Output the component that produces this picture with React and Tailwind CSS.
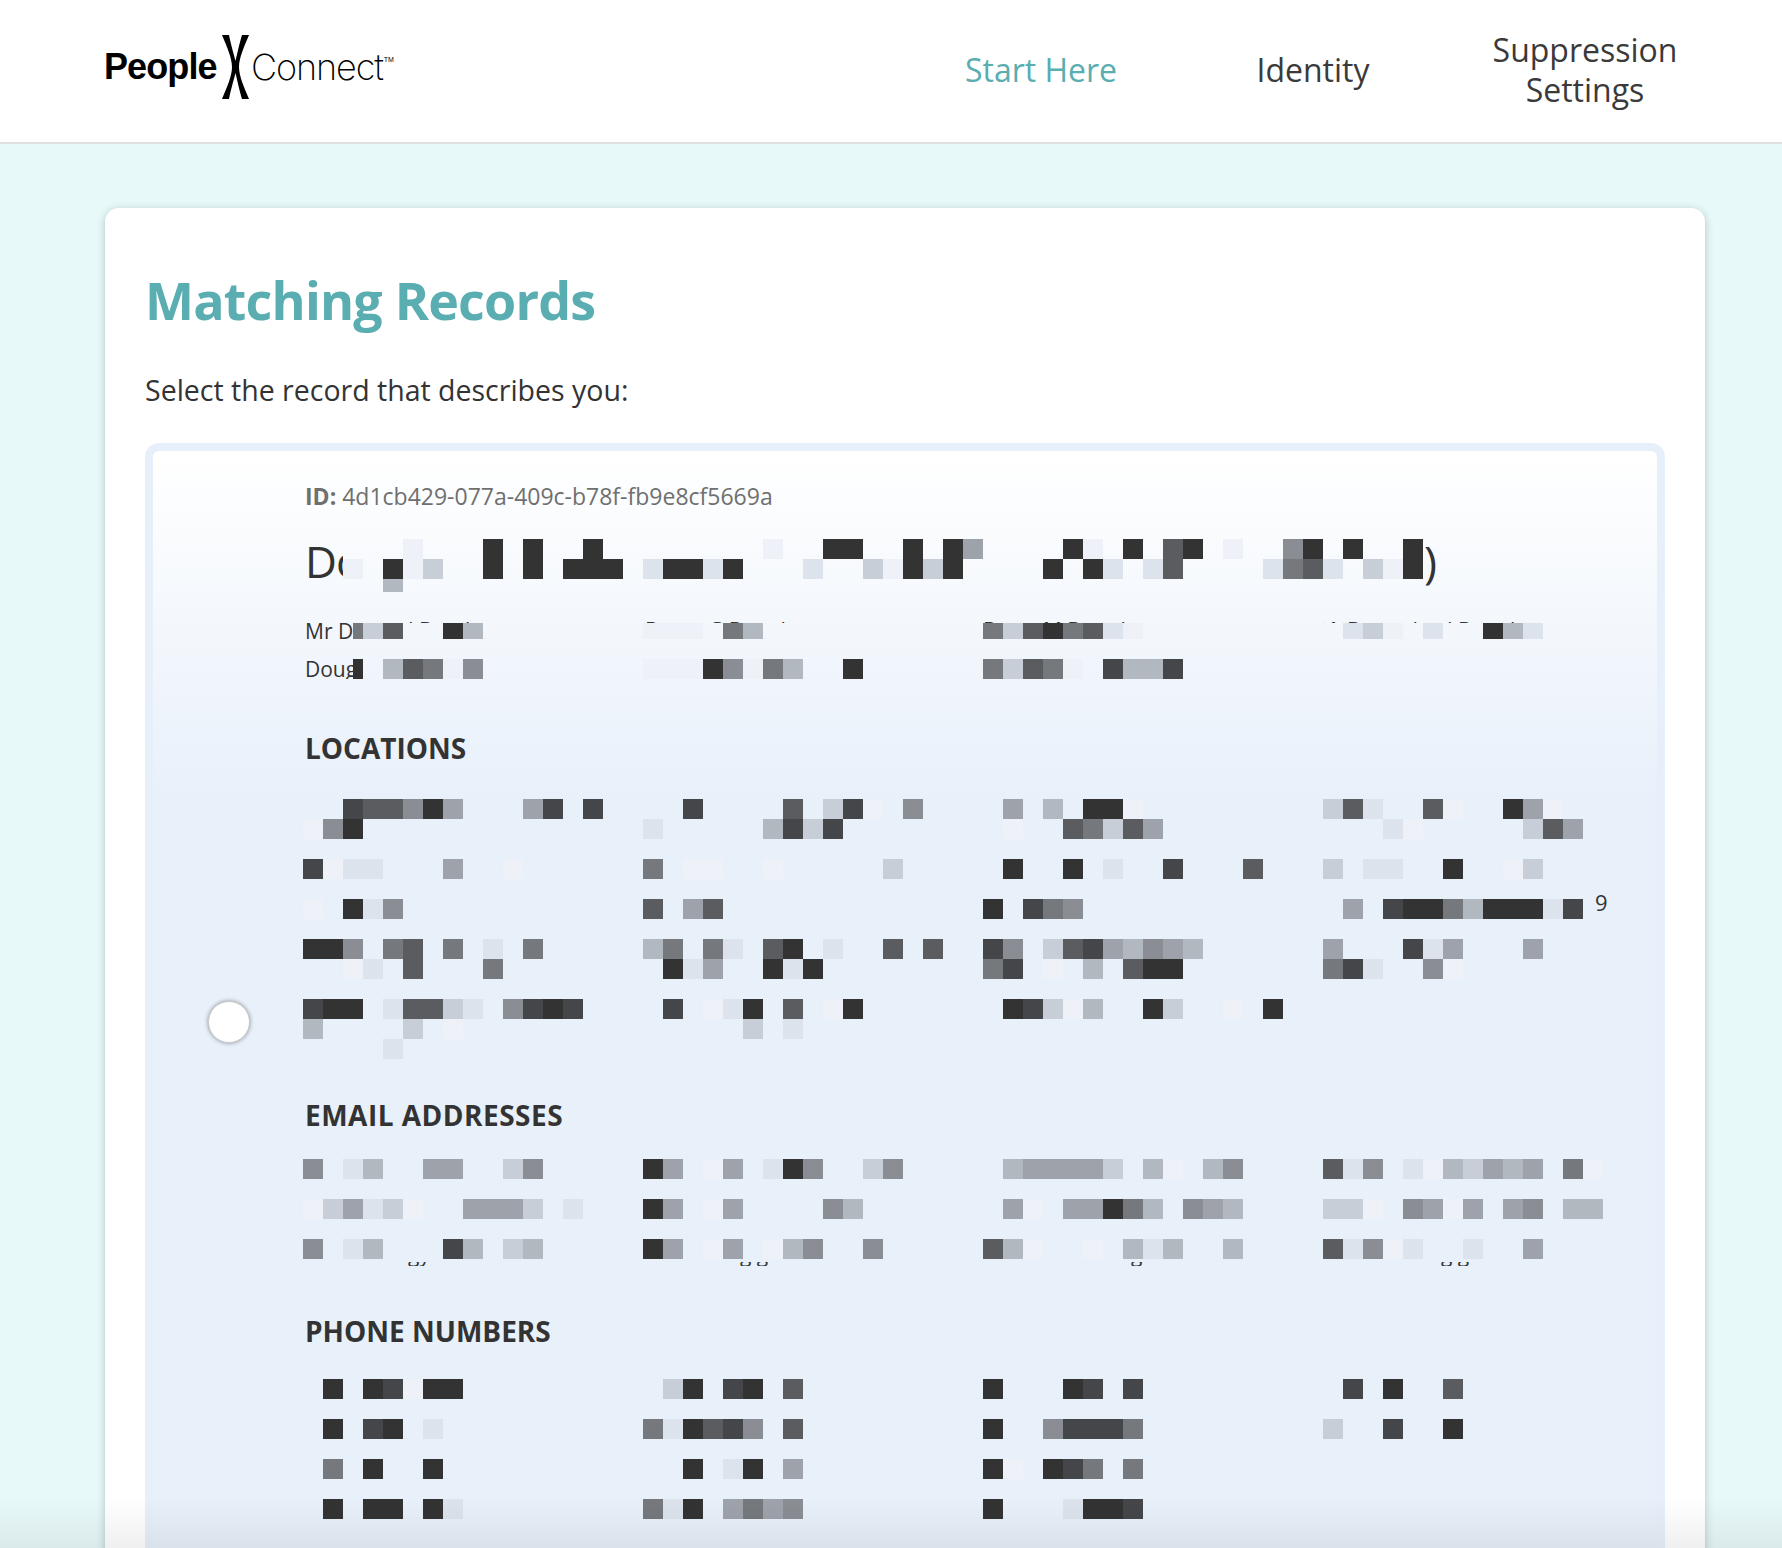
const SHADES = {
  "1": "bg-[#eef2f8]",
  "2": "bg-[#dde3ec]",
  "3": "bg-[#c8ced7]",
  "4": "bg-[#b2b8c0]",
  "5": "bg-[#9ea3ab]",
  "6": "bg-[#8a8e94]",
  "7": "bg-[#75787d]",
  "8": "bg-[#5a5c60]",
  "9": "bg-[#444649]",
  "0": "bg-[#333333]",
};

function Row({ cells = "", tall = "h-5" }) {
  return (
    <div className={`flex ${tall}`}>
      {cells.split("").map((c, i) => (
        <span key={i} className={`w-5 shrink-0 ${SHADES[c] || ""}`} />
      ))}
    </div>
  );
}

function Sparse({ map, from, tall }) {
  const keys = Object.keys(map).map(Number);
  const end = Math.max(...keys);
  let cells = "";
  for (let i = from; i <= end; i++) cells += map[i] || " ";
  return <Row cells={cells} tall={tall} />;
}

function Cols({ columns, extra }) {
  return (
    <div className="grid grid-cols-[340px_340px_340px_340px]">
      {columns.map((rows, i) => (
        <div key={i} className="relative">
          {rows.map((r, j) => (
            <Row key={j} cells={r} />
          ))}
          {extra && extra[i]}
        </div>
      ))}
    </div>
  );
}

function Heading({ children, className }) {
  return (
    <h3 className={`ml-[2px] h-[30px] text-[28px] leading-[30px] font-bold text-[#333333] ${className}`}>
      {children}
    </h3>
  );
}

function Tips({ items }) {
  return (
    <div className="relative h-[3px] overflow-hidden text-[21px] leading-[24px]">
      {items.map(([left, text]) => (
        <span key={left} className="absolute top-[-2px] whitespace-nowrap" style={{ left }}>
          {text}
        </span>
      ))}
    </div>
  );
}

function Tails({ items }) {
  return (
    <div className="relative mt-[3px] h-1 overflow-hidden text-[21px] leading-[24px]">
      {items.map(([left, text]) => (
        <span key={left} className="absolute top-[-20px] whitespace-nowrap" style={{ left }}>
          {text}
        </span>
      ))}
    </div>
  );
}

const LOCATIONS = [
  ["  988605   59 9", "160", "", "9122   5  1", "", "1 026", "", "006 78 7 2 7", "  12 8   7", "", "900 28832 6909", "4    3 1", "    2"],
  ["  9    8 391 6", "2     4939", "", "7 11  1     3", "", "8 58", "", "47 72 80 2  8 8", " 025  020", "", " 9 120 8 10", "     3 2", ""],
  [" 5 4 001", " 1  87385", "", " 0  0 2  9   8", "", "0 976", "", "96 38954654", "79 1 4 800", "", " 09314  03  1 0", "", ""],
  ["382  81  051", "   21     385", "", "3 22  0  13", "", " 5 9007400029", "", "5   925   5", "792  61", "", "", "", ""],
];

const EMAILS = [
  ["6 24  55  36", "", "135231  5553 2", "", "6 24   94 34"],
  ["05 15 206  36", "", "05 15    64", "", "05 15 146  6"],
  [" 455553 41 46", "", " 51 55074 654", "", "841  1 424  4"],
  ["826 2143545 71", "", "331 6515 56 44", "", "82612  2  5"],
];

const PHONES = [
  [" 0 09100", "", " 0 90 2", "", " 7 0  0", "", " 0 00 02"],
  [" 30 90 8", "", "720896 8", "", "  0 20 5", "", "720 5756"],
  ["0   09 9", "", "0  69997", "", "01 097 7", "", "0   2009"],
  [" 9 0  8", "", "3  9  0", "", "", "", ""],
];

const NAME_TOP = { 5: "1", 9: "0", 11: "0", 14: "0", 23: "1", 26: "0", 27: "0", 30: "0", 32: "0", 33: "5", 38: "0", 39: "1", 41: "0", 43: "8", 44: "0", 46: "1", 49: "6", 50: "0", 52: "0", 55: "0" };
const NAME_MID = { 2: "1", 4: "0", 5: "1", 6: "3", 9: "0", 11: "0", 13: "0", 14: "0", 15: "0", 17: "2", 18: "0", 19: "0", 20: "2", 21: "0", 25: "2", 28: "3", 29: "1", 30: "0", 31: "3", 32: "0", 37: "0", 39: "0", 40: "2", 42: "2", 43: "8", 48: "2", 49: "7", 50: "8", 51: "2", 53: "3", 54: "1", 55: "0" };

function Logo() {
  return (
    <div className="mb-[9px] flex h-[64px] items-center text-black">
      <span className="w-[118px] font-['Liberation_Sans',sans-serif] text-[36px] leading-none font-bold tracking-[-0.9px]">People</span>
      <svg viewBox="0 0 27 64" className="h-16 w-[27px] shrink-0" fill="currentColor">
        <path d="M0 0H7C9 10 12 20 13.5 26C15 20 17 10 20 0H27C22 12 17 23 17 32C17 41 22 52 27 64H20C17 54 15 44 13.5 38C12 44 9 54 7 64H0C5 52 10 41 10 32C10 23 5 12 0 0Z" />
      </svg>
      <span className="ml-[2px] font-['Inter',sans-serif] text-[36px] leading-none font-extralight tracking-[-1.1px]">Connect</span>
      <span className="mb-[14px] ml-[1px] font-['Liberation_Sans',sans-serif] text-[7px] leading-none">TM</span>
    </div>
  );
}

export default function App() {
  return (
    <div className="relative h-[1548px] overflow-hidden bg-[#e8f9f9] font-['Open_Sans',sans-serif] text-[#333333]">
      <header className="flex h-[144px] items-center justify-between border-b-2 border-[#e0e0e0] bg-white pr-[61px] pl-[104px]">
        <Logo />
        <nav className="mb-[3px] flex text-center text-[32px] leading-[40px]">
          <a className="flex w-[272px] items-center justify-center text-[#5aadb0]">Start Here</a>
          <a className="flex w-[272px] items-center justify-center text-[#3a3a3a]">Identity</a>
          <a className="flex w-[272px] items-center justify-center text-[#3a3a3a]">
            Suppression
            <br />
            Settings
          </a>
        </nav>
      </header>

      <main className="mt-16 ml-[105px] w-[1600px] rounded-[14px] bg-white px-10 pt-[62px] shadow-[0_2px_8px_rgba(0,40,40,0.25)]">
        <h1 className="h-[60px] text-[52px] leading-[60px] font-bold tracking-[-0.8px] text-[#5aadb0]">Matching Records</h1>
        <p className="mt-[42px] h-9 text-[28.5px] leading-9 text-[#333333]">Select the record that describes you:</p>

        <section className="mt-[35px] flex h-[1158px] w-[1520px] rounded-[14px] border-8 border-[#e7f0fa] bg-[linear-gradient(#ffffff,#e8f0fa_350px)]">
          <div className="flex w-[150px] shrink-0 items-center justify-center pl-[2px]">
            <span className="size-[42px] rounded-full border border-[#cbcbcb] bg-white shadow-[0_0_4px_rgba(0,0,0,0.4)]" />
          </div>

          <div className="flex-1 pt-[30px]">
            <p className="ml-[2px] h-[30px] text-[23px] leading-[30px] text-[#6f6f6f]">
              <b className="font-bold">ID:</b> 4d1cb429-077a-409c-b78f-fb9e8cf5669a
            </p>

            <div className="mt-7 flex h-[53px]">
              <span className="h-[53px] w-10 shrink-0 overflow-hidden pl-[2px] text-[44px] leading-[44px] tracking-[-1px]">Do</span>
              <div className="w-[1080px] shrink-0">
                <Sparse map={NAME_TOP} from={2} />
                <Sparse map={NAME_MID} from={2} />
                <Row tall="h-[13px]" cells="  4" />
              </div>
              <span className="h-[53px] pl-px text-[44px] leading-[44px]">)</span>
            </div>

            <div className="mt-7 grid grid-cols-[340px_340px_340px_340px]">
              <Tips items={[[105, "J B"], [162, "h"]]} />
              <Tips items={[[2, "D"], [65, "G B"], [130, "d"]]} />
              <Tips items={[[0, "D"], [60, "M B"], [130, "d"]]} />
              <Tips items={[[-5, "M"], [24, "B"], [82, "d"], [124, "J B"], [187, "h"]]} />
            </div>
            <div className="grid grid-cols-[340px_340px_340px_340px] text-[21px] leading-4">
              <div className="flex h-4">
                <span className="w-[50px] shrink-0 overflow-hidden pl-[2px] whitespace-nowrap">Mr D</span>
                <span className="h-4 w-[10px] bg-[#75787d]" />
                <Row tall="h-4" cells="38  04" />
              </div>
              <Row tall="h-4" cells="111 74" />
              <Row tall="h-4" cells="73807821" />
              <Row tall="h-4" cells=" 231 2  042" />
            </div>

            <div className="mt-5 grid grid-cols-[340px_340px_340px_340px] text-[21px] leading-5">
              <div className="flex h-5">
                <span className="w-[50px] shrink-0 overflow-hidden pl-[2px] whitespace-nowrap">Doug</span>
                <span className="h-5 w-[10px] bg-[#333333]" />
                <Row cells=" 48716" />
              </div>
              <Row cells="11106174  0" />
              <Row cells="73871 9449" />
              <Row />
            </div>

            <Heading className="mt-[54px]">LOCATIONS</Heading>
            <div className="mt-9">
              <Cols
                columns={LOCATIONS}
                extra={[
                  null,
                  null,
                  null,
                  <span key="nine" className="absolute top-[91px] left-[272px] text-[22px] leading-[24px]">9</span>,
                ]}
              />
            </div>

            <Heading className="mt-[41px] tracking-[0.5px]">EMAIL ADDRESSES</Heading>
            <div className="mt-[29px]">
              <Cols columns={EMAILS} />
            </div>
            <div className="grid grid-cols-[340px_340px_340px_340px]">
              <Tails items={[[105, "gy"]]} />
              <Tails items={[[97, "g g"]]} />
              <Tails items={[[148, "g"]]} />
              <Tails items={[[118, "g g"]]} />
            </div>

            <Heading className="mt-[50px]">PHONE NUMBERS</Heading>
            <div className="mt-[33px]">
              <Cols columns={PHONES} />
            </div>
          </div>
        </section>
      </main>

      <div className="pointer-events-none absolute inset-x-0 bottom-0 h-[50px] bg-gradient-to-b from-transparent to-black/6" />
    </div>
  );
}
